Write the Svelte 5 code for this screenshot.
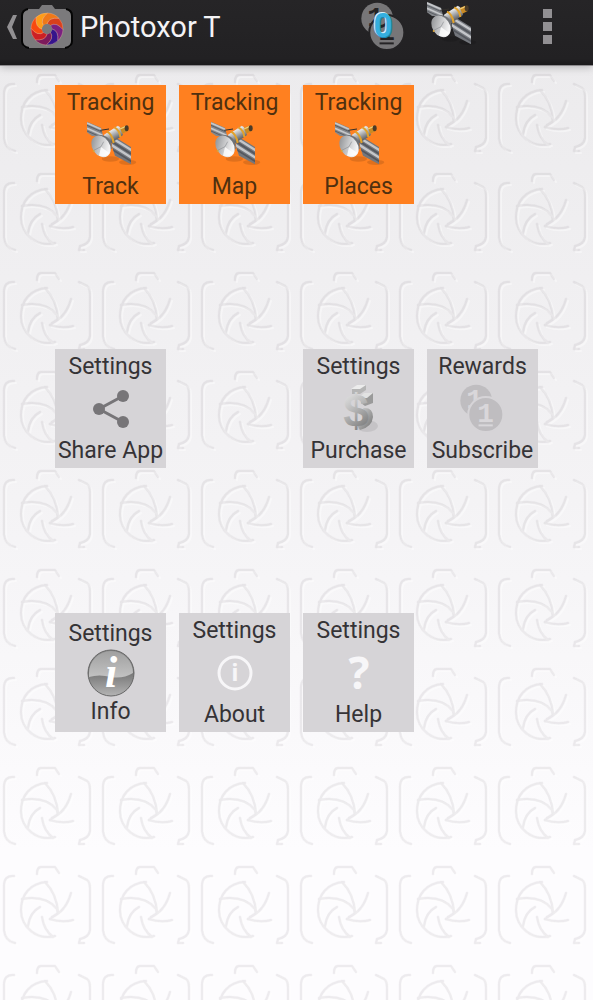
<script lang="ts">
  type Icon = "satellite" | "share" | "dollar" | "coins" | "info" | "about" | "help";
  type Tile = { group: string; name: string; icon: Icon; row: number; col: number };

  const tiles: Tile[] = [
    { group: "Tracking", name: "Track", icon: "satellite", row: 1, col: 1 },
    { group: "Tracking", name: "Map", icon: "satellite", row: 1, col: 2 },
    { group: "Tracking", name: "Places", icon: "satellite", row: 1, col: 3 },
    { group: "Settings", name: "Share App", icon: "share", row: 2, col: 1 },
    { group: "Settings", name: "Purchase", icon: "dollar", row: 2, col: 3 },
    { group: "Rewards", name: "Subscribe", icon: "coins", row: 2, col: 4 },
    { group: "Settings", name: "Info", icon: "info", row: 3, col: 1 },
    { group: "Settings", name: "About", icon: "about", row: 3, col: 2 },
    { group: "Settings", name: "Help", icon: "help", row: 3, col: 3 },
  ];

  // Clockwise, starting from the blade on the right
  const bladeColors = ["#d8401c", "#7a2080", "#35148c", "#7c1a5c", "#cc2024", "#f84a10", "#ff9c18", "#f07818"];

  function point(radius: number, degrees: number) {
    const a = (degrees * Math.PI) / 180;
    return `${(radius * Math.cos(a)).toFixed(2)} ${(radius * Math.sin(a)).toFixed(2)}`;
  }

  // One shutter blade, swept between two curved edges
  function blade(i: number) {
    const step = 360 / bladeColors.length;
    const a = i * step - 90;
    const b = a + step;
    return `M${point(5, a)} Q${point(12, a + 8)} ${point(16, a + 48)} A16 16 0 0 1 ${point(16, b + 48)} Q${point(12, b + 8)} ${point(5, b)} Z`;
  }
</script>

{#snippet satellite()}
  <svg class="probe" viewBox="0 0 144 144" aria-hidden="true">
    <defs>
      <clipPath id="panel-left">
        <path d="M0 2 L42 20 L48 44 L16 46 L0 34 Z" />
      </clipPath>
      <clipPath id="panel-right">
        <path d="M80 46 L132 78 V130 L84 104 L74 72 Z" />
      </clipPath>
      <linearGradient id="tube" x1="0" y1="0" x2="0.5" y2="1">
        <stop offset="0.1" stop-color="#77797c" />
        <stop offset="0.35" stop-color="#e8e9ea" />
        <stop offset="0.8" stop-color="#66686c" />
      </linearGradient>
      <linearGradient id="dish" x1="0" y1="0" x2="0.7" y2="1">
        <stop offset="0.1" stop-color="#8e9093" />
        <stop offset="0.5" stop-color="#c3c4c6" />
        <stop offset="0.9" stop-color="#f4f4f5" />
      </linearGradient>
    </defs>
    <ellipse cx="70" cy="114" rx="26" ry="8" fill="#000" opacity="0.12" />
    <ellipse cx="122" cy="124" rx="26" ry="8" fill="#000" opacity="0.12" />
    <g clip-path="url(#panel-left)">
      <rect width="50" height="50" fill="#85888d" />
      <path d="M0 6 L50 28 M0 22 L50 44" stroke="#c6c8cb" stroke-width="5" />
      <path d="M0 13 L50 35 M0 30 L50 52" stroke="#5c5f65" stroke-width="3" />
    </g>
    <g clip-path="url(#panel-right)">
      <rect x="70" y="40" width="64" height="92" fill="#74777d" />
      <path d="M70 48 L140 92 M70 70 L140 114" stroke="#c4c6ca" stroke-width="7" />
      <path d="M70 59 L140 103 M70 82 L140 126" stroke="#54575e" stroke-width="5" />
    </g>
    <path d="M40 28 L66 24" stroke="#33302c" stroke-width="3" />
    <path d="M50 42 L92 14 Q106 20 108 42 L66 72 Z" fill="url(#tube)" />
    <path d="M60 32 Q76 40 80 66 M82 19 Q98 27 100 48" fill="none" stroke="#e0a22c" stroke-width="6" />
    <path d="M98 21 L114 14 L122 30 L106 38 Z" fill="#c98a24" />
    <path d="M99 24 L115 17" stroke="#f2cf79" stroke-width="4" />
    <ellipse cx="119" cy="22" rx="6" ry="9" fill="#4a3b28" />
    <path d="M22 48 Q40 36 60 48 Q76 60 74 82 L64 98 Z" fill="#6f7276" />
    <ellipse cx="42" cy="76" rx="26" ry="35" transform="rotate(-34 42 76)" fill="url(#dish)" />
    <path d="M42 78 L67 96 Q54 111 36 104 Z" fill="#fff" opacity="0.8" />
    <path d="M20 88 L42 77 L50 62" fill="none" stroke="#8b8e92" stroke-width="2" />
    <circle cx="20" cy="90" r="3" fill="#d9a334" />
  </svg>
{/snippet}

{#snippet coins()}
  <svg class="stack" viewBox="0 0 136 148" aria-hidden="true">
    <circle class="coin" cx="49" cy="50" r="48" />
    <text class="digit" x="44" y="74" font-size="84" text-anchor="middle">1</text>
    <circle class="coin front" cx="78" cy="92" r="53" />
    <text class="digit" x="77" y="114" font-size="84" text-anchor="middle">1</text>
    <path class="rule" d="M56 125 H99" />
  </svg>
{/snippet}

<div class="screen">
  <svg class="wallpaper" aria-hidden="true">
    <defs>
      <g id="camera" fill="none" stroke-linecap="round" stroke-linejoin="round">
        <path d="M14 11 Q4 10 4 21 V65 Q5 76 15 78" />
        <path d="M79 11 L87 15 Q90 17 90 23 V65 Q89 72 80 74 L79 78 H84" />
        <path d="M37 9 Q37 2 41 2 H55 L59 8" />
        <path d="M47 17 C30 18 21 30 21 45 C21 62 37 76 55 71" />
        <path d="M45 17 Q57 29 58 48" />
        <path d="M22 34 Q46 30 57 44 L58 48 L50 54" />
        <path d="M52 52 Q66 46 71 28" />
        <path d="M50 54 Q62 58 73 55" />
        <path d="M40 42 Q30 47 28 61" />
        <path d="M42 52 Q44 65 53 72" />
      </g>
      <pattern id="cameras" width="99" height="99" y="73" patternUnits="userSpaceOnUse">
        <use href="#camera" x="2" y="2" stroke="#fff" stroke-width="2" opacity="0.4" />
        <use href="#camera" stroke="#8a868c" stroke-width="3" opacity="0.06" />
        <use href="#camera" stroke="#8a868c" stroke-width="2" opacity="0.09" />
      </pattern>
    </defs>
    <rect width="100%" height="100%" fill="url(#cameras)" />
  </svg>

  <header>
    <button class="home" aria-label="Back">
      <svg class="chevron" viewBox="0 0 10 24" aria-hidden="true">
        <path d="M6 0 H10 L5 12 L10 24 H6 L0 12 Z" fill="#929093" />
      </svg>
      <svg class="logo" viewBox="0 0 52 46" aria-hidden="true">
        <path d="M6 5 H18 L21 1 H31 L34 5 H46 Q51 6 51 11 V38 Q51 44 45 44 H7 Q1 44 1 38 V11 Q1 5 6 5 Z" fill="#7b7a7c" />
        <path
          d="M7 5 Q1 6 1 12 V37 Q1 43 8 44 M45 5 Q51 6 51 12 V37 Q51 43 44 44"
          fill="none"
          stroke="#050505"
          stroke-width="2"
        />
        <g transform="translate(26 25)">
          {#each bladeColors as color, i}
            <path d={blade(i)} fill={color} stroke="#ffc9a8" stroke-width="0.3" />
          {/each}
          <circle r="5" fill="#7b7a7c" />
        </g>
      </svg>
    </button>
    <h1>Photoxor T</h1>

    <nav class="actions">
      <button class="action rewards" aria-label="Rewards">
        {@render coins()}
        <span class="count">0</span>
      </button>
      <button class="action tracking" aria-label="Tracking">
        {@render satellite()}
      </button>
      <button class="action more" aria-label="More options">
        <i></i><i></i><i></i>
      </button>
    </nav>
  </header>

  <main>
    {#each tiles as tile}
      <button
        class="tile"
        class:tracked={tile.icon === "satellite"}
        class:info={tile.icon === "info"}
        style="grid-row: {tile.row}; grid-column: {tile.col}"
      >
        <span>{tile.group}</span>
        <span class="icon">
          {#if tile.icon === "satellite"}
            {@render satellite()}
          {:else if tile.icon === "coins"}
            {@render coins()}
          {:else if tile.icon === "share"}
            <svg width="38" height="40" viewBox="0 0 38 40" aria-hidden="true">
              <path d="M31 7 L7 20 L31 33" fill="none" stroke="#777578" stroke-width="3" />
              <circle cx="31" cy="7" r="6" fill="#777578" />
              <circle cx="7" cy="20" r="6" fill="#777578" />
              <circle cx="31" cy="33" r="6" fill="#777578" />
            </svg>
          {:else if tile.icon === "dollar"}
            <svg width="40" height="56" viewBox="0 0 40 56" aria-hidden="true">
              <defs>
                <linearGradient id="metal" x1="0" y1="0" x2="0.4" y2="1">
                  <stop offset="0" stop-color="#f6f6f6" />
                  <stop offset="0.5" stop-color="#bdbdbd" />
                  <stop offset="1" stop-color="#7d7d7d" />
                </linearGradient>
                <linearGradient id="side" x1="0" y1="0" x2="1" y2="1">
                  <stop offset="0" stop-color="#d8d8d8" />
                  <stop offset="1" stop-color="#6f6f6f" />
                </linearGradient>
              </defs>
              <ellipse cx="28" cy="45" rx="11" ry="6" fill="#000" opacity="0.08" />
              <path d="M13 8 L19 4 H27 V9 L21 13 H13 Z" fill="#b5b5b5" />
              <path d="M12 8 L18 4 H27 L21 8 Z" fill="#ececec" />
              <path d="M22 17 L27 12 H34 V22 L26 25 L22 22 Z" fill="#9a9a9a" />
              <path d="M20 17 L25 12 H34 L28 17 Z" fill="#e2e2e2" />
              <path d="M24 27 Q34 26 34 36 Q33 46 21 49 L18 44 Q29 36 24 27 Z" fill="url(#side)" />
              <text class="dollar" x="17" y="46" font-size="46" text-anchor="middle" fill="url(#metal)">$</text>
            </svg>
          {:else if tile.icon === "info"}
            <svg width="48" height="48" viewBox="0 0 48 48" aria-hidden="true">
              <defs>
                <linearGradient id="ball" x2="0" y2="1">
                  <stop offset="0" stop-color="#8a8a8a" />
                  <stop offset="0.5" stop-color="#777" />
                  <stop offset="1" stop-color="#b4b4b4" />
                </linearGradient>
                <linearGradient id="gloss" x2="0" y2="1">
                  <stop offset="0" stop-color="#a0a0a0" />
                  <stop offset="1" stop-color="#c2c2c2" />
                </linearGradient>
              </defs>
              <circle cx="24" cy="24" r="23" fill="url(#ball)" stroke="#666" />
              <path d="M2 24 A22 22 0 0 1 46 24 Q36 30 24 28 Q12 25 2 28 Z" fill="url(#gloss)" />
              <text class="italic" x="24" y="38" font-size="44" text-anchor="middle">i</text>
            </svg>
          {:else if tile.icon === "about"}
            <svg width="36" height="36" viewBox="0 0 36 36" aria-hidden="true">
              <circle cx="18" cy="18" r="16" fill="none" stroke="#f7f6f8" stroke-width="3" />
              <text class="sign" x="18" y="26" font-size="24" text-anchor="middle">i</text>
            </svg>
          {:else}
            <svg width="30" height="40" viewBox="0 0 30 40" aria-hidden="true">
              <text class="sign" x="15" y="36" font-size="44" text-anchor="middle">?</text>
            </svg>
          {/if}
        </span>
        <span>{tile.name}</span>
      </button>
    {/each}
  </main>
</div>

<style>
  :global(body) {
    margin: 0;
  }

  .screen {
    position: relative;
    min-height: 100vh;
    overflow: hidden;
    background: linear-gradient(#ebeaec, #f4f3f5 50%, #fdfcfe 85%);
    font-family: Roboto, "Noto Sans", sans-serif;
  }

  .wallpaper {
    position: absolute;
    inset: 0;
    width: 100%;
    height: 100%;
  }

  button {
    padding: 0;
    border: 0;
    background: none;
    font: inherit;
    cursor: pointer;
  }

  svg {
    display: block;
    overflow: visible;
  }

  header {
    position: relative;
    display: flex;
    align-items: center;
    box-sizing: border-box;
    height: 66px;
    padding: 0 0 12px 7px;
    border-bottom: 1px solid #8c8a8d;
    background: linear-gradient(#262527, #222123 90%, #1a191b);
    box-shadow: 0 1px 8px rgba(0, 0, 0, 0.25);
  }

  .home {
    display: flex;
    align-items: center;
    gap: 4px;
  }

  .chevron {
    width: 10px;
    height: 24px;
  }

  .logo {
    width: 52px;
    height: 46px;
  }

  h1 {
    margin: 0 0 0 7px;
    color: #f4f3f5;
    font-size: 29px;
    font-weight: 400;
    line-height: 36px;
    white-space: nowrap;
  }

  .actions {
    display: flex;
    align-self: stretch;
    margin-left: auto;
  }

  .action {
    position: relative;
    display: flex;
    align-items: center;
    justify-content: center;
    width: 68px;
  }

  .tracking {
    align-items: flex-start;
    padding-top: 1px;
  }

  .more {
    flex-direction: column;
    gap: 4px;
    width: 92px;
    margin-left: 16px;
  }

  .more i {
    width: 9px;
    height: 9px;
    background: #929093;
  }

  .probe {
    width: 48px;
    height: 48px;
  }

  .stack {
    width: 45px;
    height: 49px;
  }

  .coin {
    fill: #bfbdc0;
  }

  .front {
    stroke: #d6d4d7;
    stroke-width: 6;
  }

  .digit {
    fill: #d9d7da;
    font-family: "Liberation Mono", monospace;
    font-weight: 700;
  }

  .rule {
    stroke: #d9d7da;
    stroke-width: 6;
  }

  .rewards .coin {
    fill: #777678;
  }

  .rewards .front {
    stroke: #242325;
  }

  .rewards .digit {
    fill: #242325;
  }

  .rewards .rule {
    stroke: #242325;
  }

  .count {
    position: absolute;
    inset: 0;
    color: #35afdf;
    font-size: 33px;
    font-weight: 700;
    line-height: 52px;
    text-align: center;
    text-shadow: -1px -1px 0 #d8f1fb, 1px 1px 0 #1c87b4;
  }

  main {
    position: relative;
    display: grid;
    grid-template-columns: repeat(4, 1fr);
    gap: 145px 13px;
    padding: 19px 55px 40px;
  }

  .tile {
    display: flex;
    flex-direction: column;
    align-items: center;
    justify-content: center;
    min-height: 119px;
    background: #d6d4d7;
    color: #353336;
    font-size: 23px;
    line-height: 28px;
    white-space: nowrap;
  }

  .tracked {
    background: #ff8020;
    color: #50300f;
  }

  .icon {
    display: flex;
    align-items: center;
    justify-content: center;
    height: 56px;
  }

  .info .icon {
    height: 50px;
  }

  .dollar {
    font-family: "Liberation Sans", sans-serif;
    font-weight: 700;
  }

  .italic {
    fill: #fff;
    font-family: "Liberation Serif", serif;
    font-style: italic;
    font-weight: 700;
  }

  .sign {
    fill: #f7f6f8;
    font-family: "Open Sans", sans-serif;
    font-weight: 700;
  }
</style>
